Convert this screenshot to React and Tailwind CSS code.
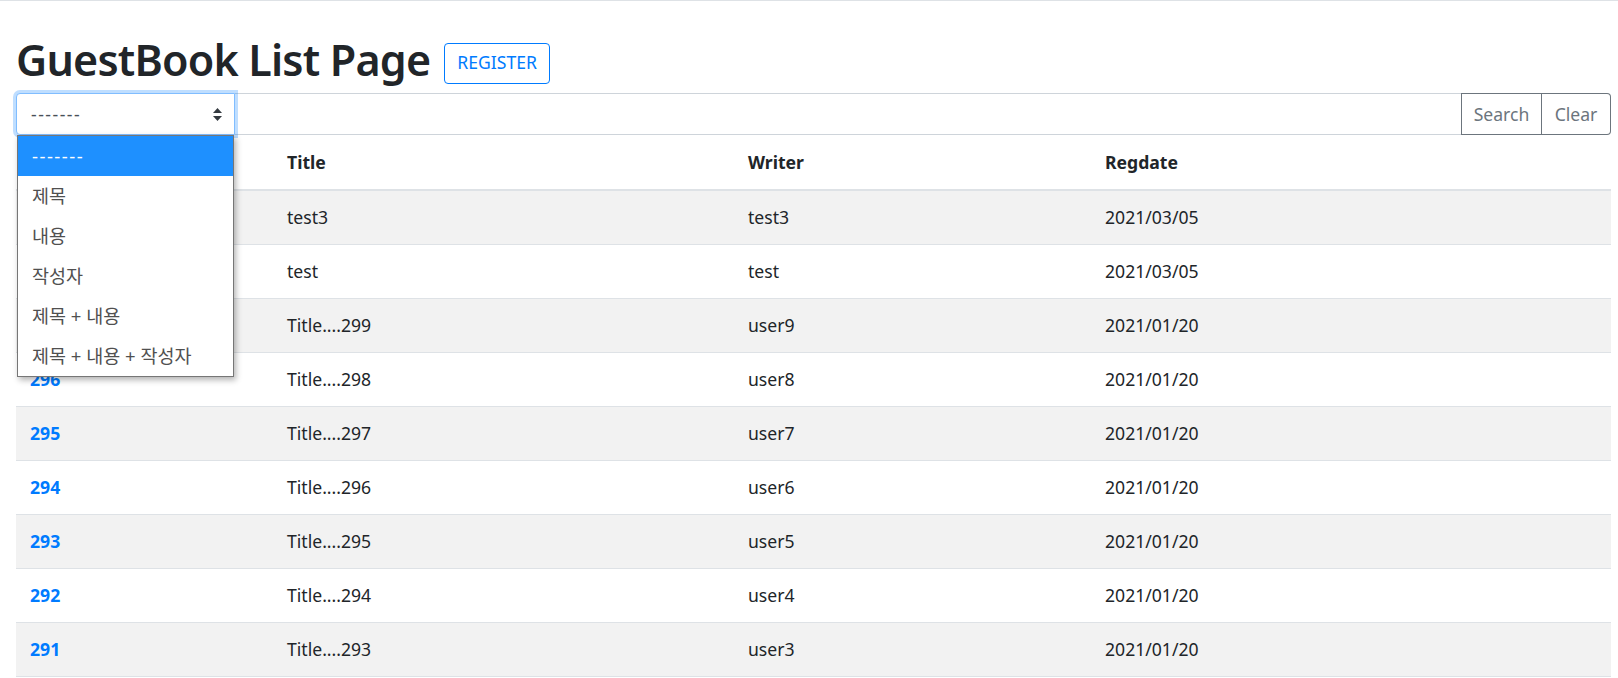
import React from 'react';

const rows = [
  { gno: 302, title: 'test3', writer: 'test3', regdate: '2021/03/05' },
  { gno: 301, title: 'test', writer: 'test', regdate: '2021/03/05' },
  { gno: 297, title: 'Title....299', writer: 'user9', regdate: '2021/01/20' },
  { gno: 296, title: 'Title....298', writer: 'user8', regdate: '2021/01/20' },
  { gno: 295, title: 'Title....297', writer: 'user7', regdate: '2021/01/20' },
  { gno: 294, title: 'Title....296', writer: 'user6', regdate: '2021/01/20' },
  { gno: 293, title: 'Title....295', writer: 'user5', regdate: '2021/01/20' },
  { gno: 292, title: 'Title....294', writer: 'user4', regdate: '2021/01/20' },
  { gno: 291, title: 'Title....293', writer: 'user3', regdate: '2021/01/20' },
];

const options = ['-------', '제목', '내용', '작성자', '제목 + 내용', '제목 + 내용 + 작성자'];

const font = { fontFamily: '"Noto Sans", "Noto Sans CJK KR", sans-serif' };

const App = () => {
  return (
    <div
      className="min-h-[678px] bg-white border-t border-[#dee2e6] pl-[16px] pr-[7px] text-[17.6px] text-[#212529] overflow-hidden"
      style={font}
    >
      <div className="flex items-center gap-[14px] pt-[26px] h-[92px]">
        <h1 className="text-[43px] font-semibold leading-[52px] tracking-[-0.8px]">GuestBook List Page</h1>
        <button className="mt-[6px] h-[41px] px-[12px] border border-[#007bff] rounded-[4px] text-[#007bff] text-[17.6px] leading-none">
          REGISTER
        </button>
      </div>

      <div className="relative flex h-[42px]">
        <div className="relative w-[219px] h-[42px] border border-[#80bdff] rounded-l-[4px] shadow-[0_0_0_3px_rgba(0,123,255,0.25)] flex items-center pl-[14px] pr-[12px] text-[#495057] z-10 bg-white">
          <span className="flex-1 tracking-[1.5px]">-------</span>
          <svg width="9" height="13" viewBox="0 0 9 13" className="text-[#343a40]">
            <path d="M4.5 0 L9 5 L0 5 Z" fill="currentColor" />
            <path d="M4.5 13 L9 8 L0 8 Z" fill="currentColor" />
          </svg>
        </div>
        <div className="flex-1 border-y border-[#ced4da]" />
        <button className="w-[81px] border border-[#6c757d] text-[#6c757d]">Search</button>
        <button className="w-[69px] border border-l-0 border-[#6c757d] rounded-r-[4px] text-[#6c757d]">Clear</button>

        <div className="absolute left-[1px] top-[42px] w-[217px] border border-[#767676] bg-white shadow-[2px_3px_6px_rgba(0,0,0,0.3)] z-20 text-[18.5px]">
          {options.map((o, i) => (
            <div
              key={o}
              className={
                i === 0
                  ? 'h-[40px] flex items-center pl-[14px] bg-[#1e90ff] text-white tracking-[1.5px]'
                  : 'h-[40px] flex items-center pl-[14px] text-[#505050]'
              }
            >
              {o}
            </div>
          ))}
        </div>
      </div>

      <div>
        <div className="grid grid-cols-[258px_461px_357px_1fr] h-[56px] border-b-2 border-[#dee2e6] font-bold items-center">
          <div className="px-[14px]">#</div>
          <div className="px-[13px]">Title</div>
          <div className="px-[13px]">Writer</div>
          <div className="px-[13px]">Regdate</div>
        </div>
        {rows.map((r, i) => (
          <div
            key={r.gno}
            className={
              i % 2 === 0
                ? 'grid grid-cols-[258px_461px_357px_1fr] h-[54px] border-b border-[#dee2e6] items-center bg-[#f2f2f2]'
                : 'grid grid-cols-[258px_461px_357px_1fr] h-[54px] border-b border-[#dee2e6] items-center'
            }
          >
            <div className="px-[14px] font-bold text-[#007bff]">{r.gno}</div>
            <div className="px-[13px]">{r.title}</div>
            <div className="px-[13px]">{r.writer}</div>
            <div className="px-[13px]">{r.regdate}</div>
          </div>
        ))}
      </div>
    </div>
  );
};

export default App;
